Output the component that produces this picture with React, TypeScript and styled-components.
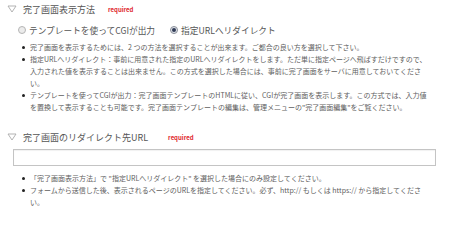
import React from "react";
import styled, { createGlobalStyle } from "styled-components";

const GlobalStyle = createGlobalStyle`
  body {
    margin: 0;
    background: #fff;
    font-family: "Noto Sans CJK JP", "Noto Sans", sans-serif;
    color: #555;
  }
`;

const Page = styled.div`
  display: flex;
  flex-direction: column;
  width: 450px;
  overflow: hidden;
`;

const Section = styled.section`
  display: flex;
  flex-direction: column;
  padding: ${(p: { $top: number }) => p.$top}px 0 0 7px;
`;

const Heading = styled.div`
  display: flex;
  align-items: center;
  height: 14px;
  gap: 6px;
  font-size: 9px;
  color: #555;
`;

const Required = styled.span<{ $gap?: number }>`
  margin-left: ${(p) => p.$gap ?? 7}px;
  font-size: 6px;
  font-weight: bold;
  color: #e0282e;
`;

const RadioRow = styled.div`
  display: flex;
  align-items: center;
  height: 14px;
  margin: 7px 0 0 11px;
  font-size: 8.7px;
  color: #555;
`;

const RadioLabel = styled.label`
  display: flex;
  align-items: center;
  gap: 3px;
  margin-right: 15px;
`;

const RadioMark = styled.span<{ $checked?: boolean }>`
  display: flex;
  align-items: center;
  justify-content: center;
  box-sizing: border-box;
  width: 8px;
  height: 8px;
  border-radius: 50%;
  border: 1px solid ${(p) => (p.$checked ? "#8a8f99" : "#b5b5b5")};
  background: ${(p) => (p.$checked ? "#dfe3ea" : "#ececec")};
  &::after {
    content: "";
    width: 4px;
    height: 4px;
    border-radius: 50%;
    background: ${(p) => (p.$checked ? "#2f3a55" : "transparent")};
  }
`;

const Notes = styled.ul`
  list-style: none;
  margin: ${(p: { $top: number }) => p.$top}px 0 0 15px;
  padding: 0;
  font-size: 7px;
  line-height: 12px;
  color: #606060;
  white-space: nowrap;
`;

const Note = styled.li`
  display: flex;
  gap: 5px;
  &::before {
    content: "";
    flex: none;
    width: 3px;
    height: 3px;
    margin-top: 5px;
    border-radius: 50%;
    background: #222;
  }
`;

const UrlInput = styled.input`
  box-sizing: border-box;
  width: 423px;
  height: 17px;
  margin: 5px 0 0 6px;
  border: 1px solid #c4c4c4;
  box-shadow: inset 0 1px 1px rgba(0, 0, 0, 0.06);
  background: #fff;
  outline: none;
`;

const Toggle = () => (
  <svg width="10" height="8" viewBox="0 0 10 8">
    <path d="M1 1 H9 L5 7 Z" fill="none" stroke="#aaa" strokeWidth="0.9" strokeLinejoin="round" />
  </svg>
);

export default function App() {
  return (
    <Page>
      <GlobalStyle />
      <Section $top={2}>
        <Heading>
          <Toggle />
          <span>完了画面表示方法</span>
          <Required>required</Required>
        </Heading>
        <RadioRow>
          <RadioLabel>
            <RadioMark />
            テンプレートを使ってCGIが出力
          </RadioLabel>
          <RadioLabel>
            <RadioMark $checked />
            指定URLへリダイレクト
          </RadioLabel>
        </RadioRow>
        <Notes $top={4}>
          <Note>
            <span>完了画面を表示するためには、2 つの方法を選択することが出来ます。ご都合の良い方を選択して下さい。</span>
          </Note>
          <Note>
            <span>
              指定URLへリダイレクト：事前に用意された指定のURLへリダイレクトをします。ただ単に指定ページへ飛ばすだけですので、
              <br />
              入力された値を表示することは出来ません。この方式を選択した場合には、事前に完了画面をサーバに用意しておいてくださ
              <br />
              い。
            </span>
          </Note>
          <Note>
            <span>
              テンプレートを使ってCGIが出力：完了画面テンプレートのHTMLに従い、CGIが完了画面を表示します。この方式では、入力値
              <br />
              を置換して表示することも可能です。完了画面テンプレートの編集は、管理メニューの"完了画面編集"をご覧ください。
            </span>
          </Note>
        </Notes>
      </Section>
      <Section $top={17}>
        <Heading>
          <Toggle />
          <span>完了画面のリダイレクト先URL</span>
          <Required $gap={14}>required</Required>
        </Heading>
        <UrlInput type="text" />
        <Notes $top={6}>
          <Note>
            <span>「完了画面表示方法」で "指定URLへリダイレクト" を選択した場合にのみ設定してください。</span>
          </Note>
          <Note>
            <span>
              フォームから送信した後、表示されるページのURLを指定してください。必ず、http:// もしくは https:// から指定してくださ
              <br />
              い。
            </span>
          </Note>
        </Notes>
      </Section>
    </Page>
  );
}
